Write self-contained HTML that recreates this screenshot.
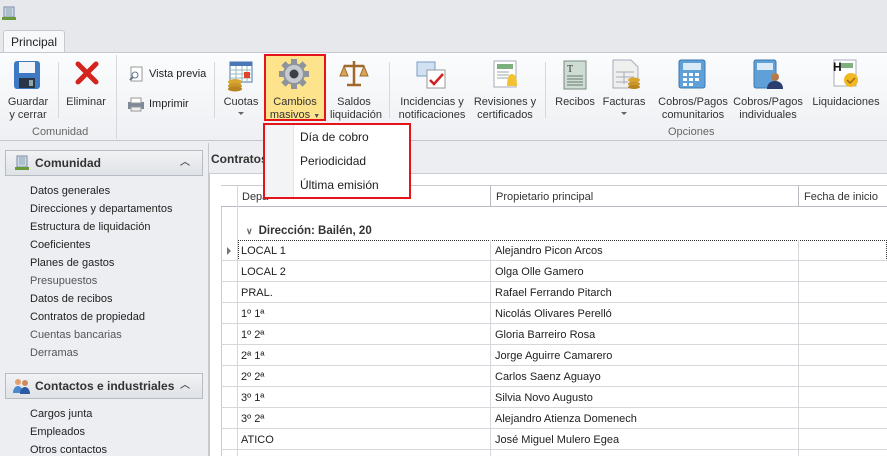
<!DOCTYPE html>
<html><head><meta charset="utf-8"><style>
*{margin:0;padding:0;box-sizing:border-box}
body{width:887px;height:456px;overflow:hidden;background:#eceef1;font-family:"Liberation Sans",sans-serif;font-size:11px;color:#1e1e1e;position:relative}
.a{position:absolute}
.top{left:0;top:0;width:887px;height:52px;background:#e6e8eb}
.tab{left:3px;top:30px;width:62px;height:23px;background:#f7f8f9;border:1px solid #c5c9cf;border-bottom:none;border-radius:3px 3px 0 0;text-align:center;line-height:22px;font-size:12px;color:#222}
.rib{left:0;top:52px;width:887px;height:89px;background:linear-gradient(#fbfcfd,#eef0f3);border-top:1px solid #c5c9cf;border-bottom:1px solid #c3c7cd}
.lbl{font-size:11px;text-align:center;line-height:13px;color:#333;white-space:nowrap}
.glbl{font-size:11px;color:#666}
.sep{width:1px;background:#d5d8dc}
.nav{left:3px;top:143px;width:203px;height:313px;background:#eceef1}
.hdr{left:5px;height:26px;width:198px;background:linear-gradient(#f1f2f4,#dfe2e6);border:1px solid #b8bcc2;font-weight:bold;font-size:12px;line-height:24px;padding-left:29px;color:#333}
.hdr span{position:absolute;right:12px;top:0;font-size:10px;color:#666}
.item{left:30px;font-size:11px;color:#222}
.grid{left:209px;top:173px;width:678px;height:283px;background:#fff;border-left:1px solid #c8ccd1;border-top:1px solid #c8ccd1}
.row{left:221px;width:666px;height:21px;border-bottom:1px solid #d4d7db}
.row .c{position:absolute;left:20px;top:5px}
.row .d{position:absolute;left:274px;top:5px}
</style></head><body>
<div class="a top"></div>
<svg class="a" style="left:2px;top:6px" width="14" height="14"><rect x="2" y="1" width="10" height="10" fill="#cfd8e8" stroke="#7b8da8"/><path d="M4 3h6M4 5h6M4 7h6M4 9h6" stroke="#8aa" /><rect x="0" y="11" width="14" height="3" fill="#6a9a3a"/></svg>
<div class="a tab">Principal</div>
<div class="a rib"></div>

<svg class="a" style="left:12px;top:60px" width="30" height="30"><rect x="2" y="1" width="26" height="28" rx="3" fill="#3f79c4"/><rect x="7" y="2" width="16" height="11" fill="#f2f4f6"/><rect x="7" y="18" width="16" height="10" fill="#2a3546"/><rect x="17" y="20" width="4" height="6" fill="#8aa"/></svg>
<div class="a lbl" style="left:5px;top:96px;width:46px">Guardar<br>y cerrar</div>
<div class="a sep" style="left:58px;top:62px;height:56px"></div>
<svg class="a" style="left:74px;top:60px" width="26" height="26"><path d="M4 4L22 22M22 4L4 22" stroke="#d3241e" stroke-width="5" stroke-linecap="round"/></svg>
<div class="a lbl" style="left:64px;top:96px;width:44px">Eliminar</div>
<div class="a glbl" style="left:32px;top:126px">Comunidad</div>
<div class="a sep" style="left:116px;top:55px;height:84px"></div>
<svg class="a" style="left:128px;top:66px" width="16" height="16"><rect x="3" y="1" width="11" height="14" fill="#fff" stroke="#999"/><circle cx="7" cy="9" r="3" fill="none" stroke="#678"/><path d="M5 11l-3 3" stroke="#678" stroke-width="2"/></svg>
<div class="a" style="left:149px;top:68px">Vista previa</div>
<svg class="a" style="left:127px;top:96px" width="18" height="16"><rect x="1" y="6" width="16" height="7" fill="#7f8a96"/><rect x="4" y="2" width="10" height="5" fill="#fff" stroke="#999"/><rect x="4" y="11" width="10" height="4" fill="#eee" stroke="#999"/></svg>
<div class="a" style="left:149px;top:98px">Imprimir</div>
<div class="a sep" style="left:214px;top:62px;height:56px"></div>
<svg class="a" style="left:224px;top:60px" width="32" height="32"><rect x="6" y="2" width="22" height="20" fill="#fff" stroke="#4a78b6"/><rect x="6" y="2" width="22" height="4" fill="#4a78b6"/><path d="M6 10h22M6 14h22M6 18h22M12 6v16M18 6v16M23 6v16" stroke="#9bb"/><rect x="20" y="12" width="6" height="6" fill="#e0442c"/><ellipse cx="11" cy="22" rx="7" ry="3" fill="#d8a530"/><ellipse cx="11" cy="26" rx="7" ry="3" fill="#c8962a"/><ellipse cx="11" cy="29" rx="7" ry="2.5" fill="#b88420"/></svg>
<div class="a lbl" style="left:218px;top:96px;width:46px">Cuotas</div>
<div class="a" style="left:238px;top:112px;width:0;height:0;border:3px solid transparent;border-top:3px solid #666"></div>
<div class="a" style="left:264px;top:54px;width:62px;height:67px;background:#fde38c;border:2px solid #e4141a"></div>
<svg class="a" style="left:278px;top:58px" width="32" height="32"><g transform="translate(16 16)"><circle r="11" fill="#8e949b"/><g fill="#8e949b"><rect x="-3" y="-15" width="6" height="30"/><rect x="-3" y="-15" width="6" height="30" transform="rotate(45)"/><rect x="-3" y="-15" width="6" height="30" transform="rotate(90)"/><rect x="-3" y="-15" width="6" height="30" transform="rotate(135)"/></g><circle r="9" fill="#c6cacf"/><circle r="4.5" fill="#3c4046"/></g></svg>
<div class="a lbl" style="left:266px;top:96px;width:58px">Cambios<br>masivos <span style="font-size:7px;color:#555">▼</span></div>
<svg class="a" style="left:338px;top:58px" width="32" height="32"><path d="M16 3v24M6 8h20M9 27h14" stroke="#a0682a" stroke-width="2.5"/><path d="M2 18l4-10 4 10zM22 18l4-10 4 10z" fill="#d7a45c" stroke="#a0682a"/></svg>
<div class="a lbl" style="left:330px;top:96px;width:48px">Saldos<br>liquidación</div>
<div class="a sep" style="left:389px;top:62px;height:56px"></div>
<svg class="a" style="left:415px;top:58px" width="32" height="32"><rect x="2" y="4" width="18" height="14" fill="#cfe1f2" stroke="#7a9ec4"/><rect x="12" y="12" width="18" height="18" fill="#fff" stroke="#999"/><path d="M15 22l4 4 9-10" stroke="#d02020" stroke-width="2.5" fill="none"/></svg>
<div class="a lbl" style="left:396px;top:96px;width:72px">Incidencias y<br>notificaciones</div>
<svg class="a" style="left:490px;top:59px" width="32" height="32"><rect x="4" y="2" width="22" height="26" fill="#fff" stroke="#aab"/><rect x="7" y="5" width="16" height="5" fill="#7cb07c"/><path d="M7 13h12M7 16h12M7 19h12" stroke="#9aa"/><path d="M17 27c0-8 2-12 5-12s5 4 5 12z" fill="#f2c232"/></svg>
<div class="a lbl" style="left:472px;top:96px;width:66px">Revisiones y<br>certificados</div>
<div class="a sep" style="left:545px;top:62px;height:56px"></div>
<svg class="a" style="left:561px;top:59px" width="28" height="32"><rect x="3" y="2" width="22" height="28" fill="#cfdcd3" stroke="#7a8a80"/><text x="6" y="13" font-size="10" font-family="Liberation Serif" fill="#333">T</text><path d="M6 17h16M6 20h16M6 23h16M6 26h16" stroke="#6a7a70"/></svg>
<div class="a lbl" style="left:552px;top:96px;width:46px">Recibos</div>
<svg class="a" style="left:610px;top:58px" width="32" height="32"><path d="M3 2h18l7 7v21H3z" fill="#eef0ee" stroke="#aab"/><path d="M6 14h18M6 19h18M6 24h12M14 14v12" stroke="#aab"/><ellipse cx="24" cy="22" rx="6" ry="2.5" fill="#d8a530"/><ellipse cx="24" cy="26" rx="6" ry="2.5" fill="#c8962a"/><ellipse cx="24" cy="29" rx="6" ry="2" fill="#b88420"/></svg>
<div class="a lbl" style="left:600px;top:96px;width:48px">Facturas</div>
<div class="a" style="left:621px;top:112px;width:0;height:0;border:3px solid transparent;border-top:3px solid #666"></div>
<svg class="a" style="left:677px;top:58px" width="32" height="32"><rect x="2" y="2" width="26" height="28" rx="2" fill="#5fa0d8" stroke="#3c78b0"/><rect x="6" y="5" width="18" height="7" fill="#dbeaf7"/><g fill="#fff"><rect x="6" y="15" width="4" height="3"/><rect x="12" y="15" width="4" height="3"/><rect x="18" y="15" width="4" height="3"/><rect x="6" y="20" width="4" height="3"/><rect x="12" y="20" width="4" height="3"/><rect x="18" y="20" width="4" height="3"/><rect x="6" y="25" width="4" height="3"/><rect x="12" y="25" width="4" height="3"/></g></svg>
<div class="a lbl" style="left:654px;top:96px;width:78px">Cobros/Pagos<br>comunitarios</div>
<svg class="a" style="left:752px;top:58px" width="32" height="32"><rect x="2" y="2" width="22" height="28" rx="2" fill="#5fa0d8" stroke="#3c78b0"/><rect x="5" y="5" width="16" height="7" fill="#dbeaf7"/><circle cx="23" cy="19" r="4" fill="#b57a4a"/><path d="M15 31c0-6 4-8 8-8s8 2 8 8z" fill="#2c3e70"/></svg>
<div class="a lbl" style="left:730px;top:96px;width:76px">Cobros/Pagos<br>individuales</div>
<svg class="a" style="left:830px;top:58px" width="32" height="32"><rect x="4" y="2" width="22" height="26" fill="#fff" stroke="#aab"/><rect x="11" y="5" width="12" height="5" fill="#7cb07c"/><text x="3" y="13" font-size="12" font-weight="bold" font-family="Liberation Sans" fill="#111">H</text><circle cx="21" cy="22" r="7" fill="#f2b824"/><path d="M17 22l3 3 5-5" stroke="#a06a10" stroke-width="1.5" fill="none"/></svg>
<div class="a lbl" style="left:808px;top:96px;width:76px">Liquidaciones</div>
<div class="a glbl" style="left:668px;top:126px">Opciones</div>

<div class="a nav"></div>
<div class="a hdr" style="top:150px">Comunidad<span>︿</span></div>
<svg class="a" style="left:14px;top:155px" width="16" height="16"><rect x="3" y="1" width="10" height="11" fill="#cfd8e8" stroke="#7b8da8"/><path d="M5 3h6M5 5h6M5 7h6M5 9h6" stroke="#8aa"/><rect x="1" y="12" width="14" height="3" fill="#6a9a3a"/></svg>
<div class="a item" style="top:185px">Datos generales</div>
<div class="a item" style="top:203px">Direcciones y departamentos</div>
<div class="a item" style="top:221px">Estructura de liquidación</div>
<div class="a item" style="top:239px">Coeficientes</div>
<div class="a item" style="top:257px">Planes de gastos</div>
<div class="a item" style="top:275px;color:#555">Presupuestos</div>
<div class="a item" style="top:293px">Datos de recibos</div>
<div class="a item" style="top:311px">Contratos de propiedad</div>
<div class="a item" style="top:329px;color:#555">Cuentas bancarias</div>
<div class="a item" style="top:347px;color:#555">Derramas</div>
<div class="a hdr" style="top:373px">Contactos e industriales<span>︿</span></div>
<svg class="a" style="left:13px;top:378px" width="18" height="16"><circle cx="5" cy="4" r="3" fill="#e0a070"/><circle cx="12" cy="5" r="3" fill="#d08a5a"/><path d="M0 15c0-5 3-7 5-7s5 2 5 7z" fill="#4a88d0"/><path d="M7 16c0-5 3-7 5-7s5 2 5 7z" fill="#2a5aa0"/></svg>
<div class="a item" style="top:408px">Cargos junta</div>
<div class="a item" style="top:426px">Empleados</div>
<div class="a item" style="top:444px">Otros contactos</div>
<div class="a" style="left:208px;top:143px;width:1px;height:313px;background:#c5c9ce"></div>

<div class="a" style="left:211px;top:152px;font-weight:bold;font-size:12px;color:#333">Contratos</div>
<div class="a grid"></div>
<div class="a" style="left:221px;top:185px;width:666px;height:271px;border-left:1px solid #c8ccd1;border-top:1px solid #c8ccd1"></div>
<div class="a" style="left:221px;top:185px;width:666px;height:22px;background:#fff;border-bottom:1px solid #b8bcc2;border-top:1px solid #c8ccd1"></div>
<div class="a" style="left:237px;top:185px;width:1px;height:271px;background:#d4d7db"></div>
<div class="a" style="left:490px;top:185px;width:1px;height:22px;background:#b8bcc2"></div>
<div class="a" style="left:798px;top:185px;width:1px;height:22px;background:#b8bcc2"></div>
<div class="a" style="left:242px;top:191px;color:#333">Depa</div>
<div class="a" style="left:496px;top:191px;color:#333">Propietario principal</div>
<div class="a" style="left:804px;top:191px;color:#333">Fecha de inicio</div>
<div class="a" style="left:246px;top:225px;font-weight:bold;font-size:11.5px;color:#333"><span style="font-size:9px;color:#666;margin-right:6px">∨</span>Dirección: Bailén, 20</div>
<div class="a" style="left:238px;top:240px;width:649px;height:21px;border:1px dotted #333"></div>
<div class="a" style="left:227px;top:247px;width:0;height:0;border:4px solid transparent;border-left:4px solid #777;border-right:none"></div>
<div class="a" style="left:490px;top:240px;width:1px;height:216px;background:#d4d7db"></div>
<div class="a" style="left:798px;top:240px;width:1px;height:216px;background:#d4d7db"></div>
<div class="a row" style="top:240px"><span class="c">LOCAL 1</span><span class="d">Alejandro Picon Arcos</span></div>
<div class="a row" style="top:261px"><span class="c">LOCAL 2</span><span class="d">Olga Olle Gamero</span></div>
<div class="a row" style="top:282px"><span class="c">PRAL.</span><span class="d">Rafael Ferrando Pitarch</span></div>
<div class="a row" style="top:303px"><span class="c">1º 1ª</span><span class="d">Nicolás Olivares Perelló</span></div>
<div class="a row" style="top:324px"><span class="c">1º 2ª</span><span class="d">Gloria Barreiro Rosa</span></div>
<div class="a row" style="top:345px"><span class="c">2ª 1ª</span><span class="d">Jorge Aguirre Camarero</span></div>
<div class="a row" style="top:366px"><span class="c">2º 2ª</span><span class="d">Carlos Saenz Aguayo</span></div>
<div class="a row" style="top:387px"><span class="c">3º 1ª</span><span class="d">Silvia Novo Augusto</span></div>
<div class="a row" style="top:408px"><span class="c">3º 2ª</span><span class="d">Alejandro Atienza Domenech</span></div>
<div class="a row" style="top:429px"><span class="c">ATICO</span><span class="d">José Miguel Mulero Egea</span></div>

<div class="a" style="left:263px;top:123px;width:148px;height:76px;background:#fff;border:2px solid #e4141a"></div>
<div class="a" style="left:265px;top:125px;width:29px;height:72px;background:#f3f4f6;border-right:1px solid #e2e4e7"></div>
<div class="a" style="left:300px;top:130px;font-size:12px">Día de cobro</div>
<div class="a" style="left:300px;top:154px;font-size:12px">Periodicidad</div>
<div class="a" style="left:300px;top:178px;font-size:12px">Última emisión</div>
</body></html>
